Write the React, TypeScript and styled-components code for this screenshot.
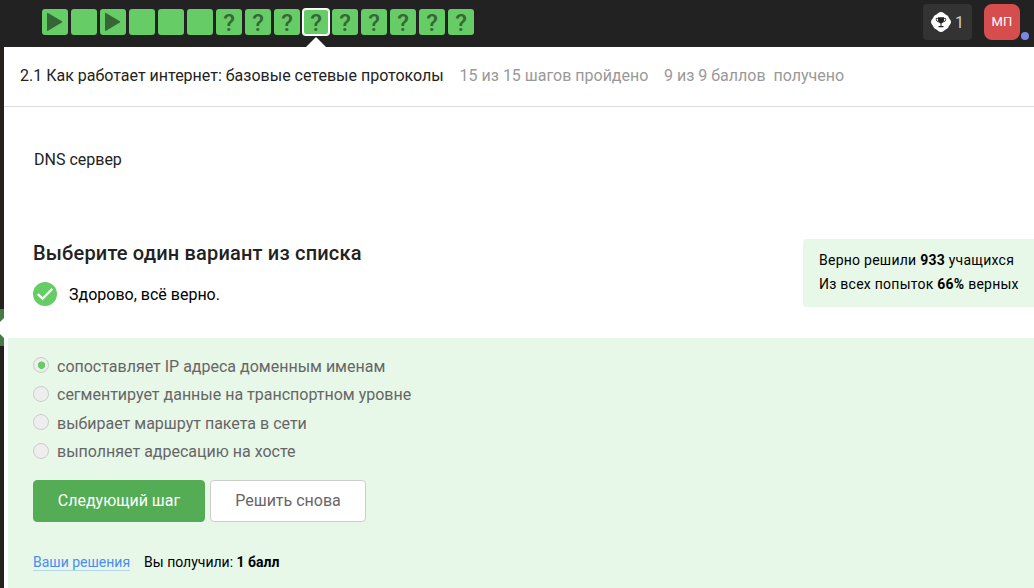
import React from 'react';
import styled, { createGlobalStyle } from 'styled-components';

const GlobalStyle = createGlobalStyle`
  *, *::before, *::after { box-sizing: border-box; }
  body {
    margin: 0;
    overflow: hidden;
    background: #fff;
    color: #222;
    font: 400 16px/24px Roboto, "Open Sans", sans-serif;
  }
  button { font: inherit; }
`;

const Page = styled.div`
  height: 588px;
  display: flex;
  flex-direction: column;
`;

const TopBar = styled.header`
  flex: none;
  height: 47px;
  padding: 0 14px 0 42px;
  display: flex;
  justify-content: space-between;
  background: #222;
`;

const Steps = styled.nav`
  display: flex;
  gap: 3px;
  padding-top: 9px;
`;

const Step = styled.div<{ $active?: boolean }>`
  position: relative;
  width: 26px;
  height: 26px;
  border-radius: 3px;
  background: #6c6;
  color: #366636;
  display: flex;
  justify-content: center;
  font-size: 24px;
  font-weight: 500;
  line-height: 28px;
  ${({ $active }) =>
    $active &&
    `
    box-shadow: 0 0 0 1px #fff, inset 0 0 0 1px #fff;
    &::after {
      content: '';
      position: absolute;
      top: 28px;
      left: 3px;
      border: 10px solid transparent;
      border-top: 0;
      border-bottom-color: #fff;
    }
  `}
  svg { display: block; }
`;

const Account = styled.div`
  display: flex;
  gap: 12px;
  padding-top: 4px;
`;

const Score = styled.div`
  width: 49px;
  height: 36px;
  padding: 8px 0 0 8px;
  display: flex;
  gap: 4px;
  border-radius: 4px;
  background: #333;
  color: #ccc;
  line-height: 22px;
`;

const Avatar = styled.div`
  position: relative;
  width: 36px;
  height: 36px;
  border-radius: 8px;
  background: #d64d4d;
  color: #fff;
  font-size: 13px;
  line-height: 36px;
  text-align: center;
  letter-spacing: 0.2px;
`;

const StatusDot = styled.i`
  position: absolute;
  left: 37px;
  top: 28px;
  width: 8px;
  height: 8px;
  border-radius: 50%;
  background: #7b88e2;
`;

const Body = styled.div`
  flex: 1;
  display: flex;
  min-height: 0;
`;

const SideStrip = styled.aside`
  width: 4px;
  padding-top: 262px;
  background: #24201d;
  svg { display: block; }
`;

const Content = styled.main`
  flex: 1;
  min-width: 0;
  display: flex;
  flex-direction: column;
`;

const LessonHeader = styled.div`
  flex: none;
  height: 60px;
  padding: 17px 0 0 16px;
  display: flex;
  border-bottom: 1px solid #ddd;
  white-space: pre;
`;

const LessonTitle = styled.span`
  width: 439.6px;
`;

const Progress = styled.span<{ $width?: number }>`
  width: ${({ $width }) => ($width ? `${$width}px` : 'auto')};
  color: #999;
`;

const Statement = styled.p`
  margin: 41px 0 0 30px;
`;

const QuizHead = styled.section`
  display: flex;
  justify-content: space-between;
  margin-top: 67px;
  height: 99px;
  padding-left: 29px;
`;

const Heading = styled.h2`
  margin: 2px 0 0;
  font-size: 20px;
  line-height: 24px;
  font-weight: 500;
  letter-spacing: 0.18px;
`;

const Feedback = styled.div`
  display: flex;
  gap: 12px;
  margin-top: 17px;
  color: #000;
  line-height: 26px;
`;

const Stats = styled.div`
  width: 231px;
  height: 68px;
  padding: 9px 0 0 16px;
  border-radius: 4px 0 0 4px;
  background: #e7f7e8;
  color: #000;
  font-size: 14px;
  line-height: 24px;
  letter-spacing: 0.25px;
  white-space: nowrap;
`;

const QuizBody = styled.section`
  flex: 1;
  margin-left: 4px;
  padding: 14px 0 0 25px;
  background: #e7f7e8;
`;

const Option = styled.label`
  display: flex;
  height: 28.4px;
  gap: 8px;
  line-height: 29px;
  color: #666;
`;

const Radio = styled.span<{ $checked?: boolean }>`
  width: 16px;
  height: 16px;
  margin-top: 5.42px;
  border: 1px solid #ccc;
  border-radius: 50%;
  background: ${({ $checked }) =>
    $checked ? 'radial-gradient(circle at 7.5px 7.2px, #6c6 3.4px, #eee 4px)' : '#eee'};
`;

const Actions = styled.div`
  display: flex;
  gap: 5px;
  margin-top: 14px;
`;

const Button = styled.button<{ $primary?: boolean }>`
  width: ${({ $primary }) => ($primary ? 172 : 156)}px;
  height: 42px;
  padding: 0;
  border: 1px solid ${({ $primary }) => ($primary ? '#54ad54' : '#ccc')};
  border-radius: 4px;
  background: ${({ $primary }) => ($primary ? '#54ad54' : '#fff')};
  color: ${({ $primary }) => ($primary ? '#fff' : '#666')};
`;

const Footer = styled.div`
  display: flex;
  gap: 14px;
  margin-top: 31px;
  color: #000;
  font-size: 14px;
  line-height: 18px;
`;

const Link = styled.a`
  height: 18px;
  color: #4c8df0;
  border-bottom: 1px solid #b4d5ee;
`;

type StepKind = 'video' | 'text' | 'quiz';
const steps: StepKind[] = [
  'video', 'text', 'video', 'text', 'text', 'text',
  ...Array<StepKind>(9).fill('quiz'),
];
const activeStep = 9;

const options = [
  'сопоставляет IP адреса доменным именам',
  'сегментирует данные на транспортном уровне',
  'выбирает маршрут пакета в сети',
  'выполняет адресацию на хосте',
];

const PlayIcon = () => (
  <svg width="26" height="26" viewBox="0 0 26 26">
    <path d="M5 4.5Q5 3.5 6 4L19.8 12.2Q20.6 13 19.8 13.5L6 21.8Q5 22.3 5 21.3Z" fill="#366636" />
  </svg>
);

const TrophyIcon = () => (
  <svg width="20" height="20" viewBox="0 0 20 20">
    <path d="M7 1.3Q10-1.3 13 1.3Q14.2 2.5 15.5 3Q17 3.3 17.5 5Q18 6.2 18.9 7.3Q21.1 10 18.9 12.7Q18 13.8 17.5 15Q17 16.7 15.5 17Q14.2 17.5 13 18.7Q10 21.3 7 18.7Q5.8 17.5 4.5 17Q3 16.7 2.5 15Q2 13.8 1.1 12.7Q-1.1 10 1.1 7.3Q2 6.2 2.5 5Q3 3.3 4.5 3Q5.8 2.5 7 1.3Z" fill="#fff" />
    <path d="M7 5.2H13V8.5Q13 10.6 10.5 11.6V14H12.5V15.2H7.5V14H9.5V11.6Q7 10.6 7 8.5Z" fill="#222" />
    <path d="M7 6.4H5.3V7.5Q5.3 9.6 7.6 9.8M13 6.4H14.7V7.5Q14.7 9.6 12.4 9.8" fill="none" stroke="#222" strokeWidth="0.9" />
  </svg>
);

const CheckIcon = () => (
  <svg width="24" height="24" viewBox="0 0 24 24">
    <circle cx="12" cy="12" r="12" fill="#6c6" />
    <path d="M4.8 12.1L9.6 16.7L19.3 6.9" fill="none" stroke="#fff" strokeWidth="2.3" />
  </svg>
);

export default function App() {
  return (
    <Page>
      <GlobalStyle />
      <TopBar>
        <Steps>
          {steps.map((kind, i) => (
            <Step key={i} $active={i === activeStep}>
              {kind === 'video' && <PlayIcon />}
              {kind === 'quiz' && '?'}
            </Step>
          ))}
        </Steps>
        <Account>
          <Score><TrophyIcon />1</Score>
          <Avatar>МП<StatusDot /></Avatar>
        </Account>
      </TopBar>
      <Body>
        <SideStrip>
          <svg width="4" height="37" viewBox="0 0 4 37">
            <path d="M0 0H4V37H0Z" fill="#467b44" />
            <path d="M0 13L4 9V29L0 25Z" fill="#fff" />
          </svg>
        </SideStrip>
        <Content>
          <LessonHeader>
            <LessonTitle>2.1 Как работает интернет: базовые сетевые протоколы</LessonTitle>
            <Progress $width={204.4}>15 из 15 шагов пройдено</Progress>
            <Progress>9 из 9 баллов  получено</Progress>
          </LessonHeader>
          <Statement>DNS сервер</Statement>
          <QuizHead>
            <div>
              <Heading>Выберите один вариант из списка</Heading>
              <Feedback><CheckIcon />Здорово, всё верно.</Feedback>
            </div>
            <Stats>
              <div>Верно решили <b>933</b> учащихся</div>
              <div>Из всех попыток <b>66%</b> верных</div>
            </Stats>
          </QuizHead>
          <QuizBody>
            {options.map((text, i) => (
              <Option key={text}><Radio $checked={i === 0} />{text}</Option>
            ))}
            <Actions>
              <Button $primary>Следующий шаг</Button>
              <Button>Решить снова</Button>
            </Actions>
            <Footer>
              <Link>Ваши решения</Link>
              <span>Вы получили: <b>1 балл</b></span>
            </Footer>
          </QuizBody>
        </Content>
      </Body>
    </Page>
  );
}
